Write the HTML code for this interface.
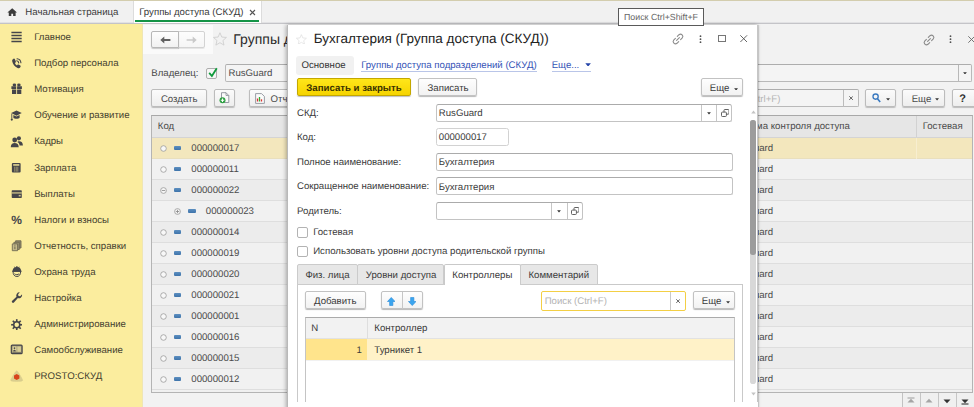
<!DOCTYPE html>
<html lang="ru"><head><meta charset="utf-8"><title>Группы доступа (СКУД)</title>
<style>
*{box-sizing:border-box;margin:0;padding:0}
html,body{width:974px;height:407px;overflow:hidden;background:#f2f2f2}
body{font-family:"Liberation Sans",sans-serif;font-size:9.65px;color:#3a3a3a;position:relative}
.a{position:absolute;white-space:nowrap}
.t{position:absolute;white-space:nowrap;line-height:12px;height:12px;letter-spacing:0;text-rendering:geometricPrecision}
.btn{position:absolute;background:linear-gradient(#fefefe,#f2f2f2);border:1px solid #c2c2c2;border-radius:2px;box-shadow:0 1px 1px rgba(0,0,0,.28)}
.dbtn{position:absolute;background:linear-gradient(#fbfbfb,#eeeeee);border:1px solid #bcbcbc;border-radius:2px;box-shadow:0 1px 1px rgba(0,0,0,.22)}
.inp{position:absolute;background:#fff;border:1px solid #c3c3c3;border-top-color:#ababab;border-radius:2.5px}
.dinp{position:absolute;background:#f4f4f4;border:1px solid #b9b9b9;border-top-color:#adadad;border-radius:2px}
.cb{position:absolute;background:#fff;border:1px solid #b3b3b3;border-radius:2px}
</style></head><body>
<div class="a" style="left:0.00px;top:0.00px;width:974.00px;height:1.00px;background:#d3cdae"></div>
<div class="a" style="left:0.00px;top:1.00px;width:974.00px;height:23.00px;background:#f1f1f1;border-bottom:1px solid #c4c4c8"></div>
<div class="a" style="left:0.00px;top:22.00px;width:974.00px;height:1.00px;background:#e2e2e4"></div>
<div class="a" style="left:132.50px;top:1.00px;width:129.00px;height:21.50px;background:#fff;border-left:1px solid #dcdcdc;border-right:1px solid #dcdcdc"></div>
<div class="a" style="left:135.00px;top:20.30px;width:124.00px;height:1.60px;background:#159447"></div>
<svg class="a" style="left:6.90px;top:7.60px;" width="10.4" height="8.7" viewBox="0 0 22 19"><path d="M11 0.5 L0.5 10 H3.5 V18.5 H9 V12.5 H13 V18.5 H18.5 V10 H21.5 Z" fill="#3c3c3c"/></svg>
<div class="t" style="left:25.30px;top:7px;">Начальная страница</div>
<div class="t" style="left:139.20px;top:7px;">Группы доступа (СКУД)</div>
<svg class="a" style="left:249.00px;top:9.30px;" width="7" height="7" viewBox="0 0 7 7"><path d="M1 1 L6 6 M6 1 L1 6" stroke="#555" stroke-width="1.1" fill="none"/></svg>
<div class="a" style="left:0.00px;top:24.00px;width:142.00px;height:383.00px;background:#fbed9e"></div>
<div class="a" style="left:142.00px;top:24.00px;width:1.30px;height:383.00px;background:#efe6b4"></div>
<div class="t" style="left:34.20px;top:32px;color:#44402f">Главное</div>
<div class="t" style="left:34.20px;top:58px;color:#44402f">Подбор персонала</div>
<div class="t" style="left:34.20px;top:84px;color:#44402f">Мотивация</div>
<div class="t" style="left:34.20px;top:110px;color:#44402f">Обучение и развитие</div>
<div class="t" style="left:34.20px;top:136px;color:#44402f">Кадры</div>
<div class="t" style="left:34.20px;top:163px;color:#44402f">Зарплата</div>
<div class="t" style="left:34.20px;top:189px;color:#44402f">Выплаты</div>
<div class="t" style="left:34.20px;top:215px;color:#44402f">Налоги и взносы</div>
<div class="t" style="left:34.20px;top:241px;color:#44402f">Отчетность, справки</div>
<div class="t" style="left:34.20px;top:267px;color:#44402f">Охрана труда</div>
<div class="t" style="left:34.20px;top:293px;color:#44402f">Настройка</div>
<div class="t" style="left:34.20px;top:319px;color:#44402f">Администрирование</div>
<div class="t" style="left:34.20px;top:345px;color:#44402f">Самообслуживание</div>
<div class="t" style="left:34.20px;top:371px;color:#44402f">PROSTO:СКУД</div>
<svg class="a" style="left:10.00px;top:30.30px;" width="14" height="14" viewBox="0 0 14 14"><path d="M1.400 2.500H11.700M1.400 5.500H11.700M1.400 8.400H11.700M1.400 11.400H11.700" stroke="#45454a" stroke-width="1.500"/></svg>
<svg class="a" style="left:10.00px;top:56.39px;" width="14" height="14" viewBox="0 0 14 14"><path d="M3.600 2.700C2.500 3.100 2 4.200 2.200 5.300 2.700 8.200 4.700 10.800 7.600 12 8.700 12.400 9.800 12.100 10.300 11.200L10.600 10.600C10.800 10.200 10.700 9.700 10.300 9.500L8.600 8.500C8.200 8.300 7.700 8.400 7.500 8.800L7 9.500C6 8.900 5.300 8 4.900 6.900L5.600 6.400C5.900 6.200 6 5.700 5.800 5.300L4.900 3.200C4.700 2.700 4.100 2.500 3.600 2.700Z" fill="#45454a"/><path d="M6.700 4.800A2.300 2.300 0 0 1 8.700 6.900M7 2.700A4.400 4.400 0 0 1 10.900 6.700" stroke="#45454a" stroke-width="1.100" fill="none" stroke-linecap="round"/></svg>
<svg class="a" style="left:10.00px;top:82.48px;" width="14" height="14" viewBox="0 0 14 14"><path d="M1.400 4.300H6.200V6.900H1.400zM7.100 4.300H11.900V6.900H7.100zM2 7.500H6.200V12.100H2zM7.100 7.500H11.300V12.100H7.100z" fill="#45454a"/><ellipse cx="4.400" cy="3" rx="1.800" ry="1.400" fill="#45454a"/><ellipse cx="8.900" cy="3" rx="1.800" ry="1.400" fill="#45454a"/></svg>
<svg class="a" style="left:10.40px;top:109.82px;" width="12" height="11.5" viewBox="0 0 24 24"><path d="M13 1 L24 6.500 L13 12 L2 6.500Z" fill="#45454a"/><path d="M6.500 10.200V16c2 2.800 11 2.800 13 0v-5.800L13 13.500z" fill="#45454a"/><path d="M3.200 7.500V18" stroke="#45454a" stroke-width="1.800"/><circle cx="3.200" cy="20" r="2.300" fill="#45454a"/></svg>
<svg class="a" style="left:10.00px;top:134.66px;" width="14" height="14" viewBox="0 0 14 14"><circle cx="8.900" cy="3.300" r="2.100" fill="#45454a"/><path d="M8.300 6.300C11 5.800 12.900 7.300 12.900 10.500H9.600C9.400 8.600 8.600 7.500 7.300 6.900z" fill="#45454a"/><circle cx="4.700" cy="5" r="2.400" fill="#45454a"/><path d="M0.800 12.300C0.800 9.200 2.300 8 4.700 8S8.700 9.200 8.700 12.300z" fill="#45454a"/></svg>
<svg class="a" style="left:11.45px;top:162.00px;" width="10.5" height="11.5" viewBox="0 0 24 24"><rect x="2" y="1" width="20" height="22" rx="2.500" fill="#45454a"/><path d="M5 4h14v3.200H5z" fill="#fbed9e"/><path d="M8.500 9.500V21M12 9.500V21M15.500 9.500V21" stroke="#fbed9e" stroke-width="1.300" opacity=".8"/></svg>
<svg class="a" style="left:10.95px;top:188.59px;" width="11.5" height="10.5" viewBox="0 0 24 24"><rect x="0.500" y="3" width="23" height="17.500" rx="1.500" fill="#45454a"/><path d="M0.500 7.500h23v3H0.500z" fill="#fbed9e" opacity=".75"/><rect x="16.500" y="13.500" width="4.500" height="3.500" fill="#cfc48a"/></svg>
<div class="t" style="left:11.20px;top:213px;font-size:12px;line-height:14px;height:14px;font-weight:bold;color:#45454a;letter-spacing:0">%</div>
<svg class="a" style="left:10.00px;top:239.02px;" width="14" height="14" viewBox="0 0 14 14"><g stroke="#6f6a52" stroke-width="0.900"><path d="M5.600 1.800H11V9H5.600z" fill="#8f8969"/><path d="M3.900 3.300H9.300V10.500H3.900z" fill="#9c9572"/><path d="M2.300 4.900H7.600V11.700H2.300z" fill="#c4ba8a"/></g><path d="M4.900 7.400V10.200" stroke="#6f6a52" stroke-width="1"/><circle cx="4.900" cy="6.300" r="0.550" fill="#6f6a52"/></svg>
<svg class="a" style="left:10.00px;top:265.11px;" width="14" height="14" viewBox="0 0 14 14"><path d="M3 6.200C3 9.800 4.600 11.500 6.850 11.500S10.700 9.800 10.700 6.200z" fill="#fbed9e" stroke="#45454a" stroke-width="1"/><path d="M2.600 6.200C2.600 3.300 4.300 2 6.850 2S11.100 3.300 11.100 6.200z" fill="#45454a"/><path d="M2.200 5.600H11.500V6.800H2.200z" fill="#45454a"/><path d="M6.100 1.200H7.600V3H6.100z" fill="#45454a"/><path d="M4.500 1.700L5.200 3M9.200 1.700L8.500 3" stroke="#45454a" stroke-width="0.800"/><path d="M4.600 8.600C5.500 10.100 8.200 10.100 9.100 8.600" stroke="#45454a" stroke-width="1" fill="none"/></svg>
<svg class="a" style="left:10.50px;top:292.45px;" width="12" height="11.5" viewBox="0 0 24 24"><path d="M22.700 6.400a6.600 6.600 0 0 1-8.800 6.200L5.600 21.800a2.500 2.500 0 0 1-3.600-3.600l9-8.200A6.600 6.600 0 0 1 17.600.8l-3.300 3.700.8 3.600 3.600.8 3.400-3.600c.4.300.6.700.6 1.100z" fill="#45454a"/></svg>
<svg class="a" style="left:10.95px;top:318.54px;" width="11.5" height="11.5" viewBox="0 0 24 24"><rect x="10.300" y="0.300" width="3.400" height="6" fill="#45454a" transform="rotate(0 12 12)"/><rect x="10.300" y="0.300" width="3.400" height="6" fill="#45454a" transform="rotate(45 12 12)"/><rect x="10.300" y="0.300" width="3.400" height="6" fill="#45454a" transform="rotate(90 12 12)"/><rect x="10.300" y="0.300" width="3.400" height="6" fill="#45454a" transform="rotate(135 12 12)"/><rect x="10.300" y="0.300" width="3.400" height="6" fill="#45454a" transform="rotate(180 12 12)"/><rect x="10.300" y="0.300" width="3.400" height="6" fill="#45454a" transform="rotate(225 12 12)"/><rect x="10.300" y="0.300" width="3.400" height="6" fill="#45454a" transform="rotate(270 12 12)"/><rect x="10.300" y="0.300" width="3.400" height="6" fill="#45454a" transform="rotate(315 12 12)"/><circle cx="12" cy="12" r="6.300" fill="none" stroke="#45454a" stroke-width="3.200"/></svg>
<svg class="a" style="left:10.00px;top:343.38px;" width="14" height="14" viewBox="0 0 14 14"><rect x="1.300" y="2.100" width="10.800" height="8.600" rx="0.900" fill="#a29b77" stroke="#45454a" stroke-width="1.200"/><rect x="2.700" y="3.500" width="3.700" height="5.300" fill="#e9dfa0"/><rect x="7.300" y="3.500" width="3.600" height="5.300" fill="#d9cf95"/><circle cx="4.500" cy="5.100" r="0.950" fill="#45454a"/><path d="M3.100 8.400c0-2.300 2.800-2.300 2.800 0z" fill="#45454a"/><path d="M2.500 9.500H11" stroke="#45454a" stroke-width="0.600" opacity=".6"/></svg>
<svg class="a" style="left:10.00px;top:369.47px;" width="14" height="14" viewBox="0 0 14 14"><path d="M6.700 1.900C7.600 1.900 12.600 10.200 12.600 11.400 12.600 12.700 0.800 12.700 0.800 11.400 0.800 10.200 5.800 1.900 6.700 1.900z" fill="#dbcf8e" stroke="#d3c889" stroke-width="0.600"/><path d="M6.700 4.900L9.400 6.400V9.400L6.700 10.900 4 9.400V6.400z" fill="#d8451b"/></svg>
<div class="a" style="left:143.30px;top:24.50px;width:70.00px;height:29.30px;background:#fafafa"></div>
<div class="a" style="left:178.00px;top:31.00px;width:27.00px;height:17.40px;background:linear-gradient(#fdfdfd,#f5f5f5);border:1px solid #d3d3d3;border-radius:0 2px 2px 0;box-shadow:0 1px 0 rgba(0,0,0,.08)"></div>
<div class="a" style="left:151.00px;top:31.00px;width:28.00px;height:17.40px;background:linear-gradient(#fdfdfd,#f1f1f1);border:1px solid #b7b7b7;border-radius:2px 0 0 2px;box-shadow:0 1px 1px rgba(0,0,0,.2)"></div>
<svg class="a" style="left:159.80px;top:35.70px;" width="11" height="8" viewBox="0 0 11 8"><path d="M0.300 4L4.300 0.500V3.100H10.400V4.900H4.300V7.500z" fill="#606060"/></svg>
<svg class="a" style="left:186.00px;top:35.70px;" width="11" height="8" viewBox="0 0 11 8"><path d="M10.700 4L6.700 0.500V3.200H0.600V4.800H6.700V7.500z" fill="#c9c9c9"/></svg>
<svg class="a" style="left:213.10px;top:32.30px;" width="13.9" height="13.9" viewBox="0 0 14 14"><path d="M7 0.800 L8.850 5.100 13.500 5.500 10 8.600 11.050 13.200 7 10.800 2.950 13.200 4 8.600 0.500 5.500 5.150 5.100Z" fill="none" stroke="#cfcfcf" stroke-width="0.900"/></svg>
<div class="t" style="left:233.30px;top:30px;font-size:14px;line-height:18px;height:18px;color:#2b2b2b">Группы доступа (СКУД)</div>
<div class="t" style="left:151.30px;top:68px;color:#4a4a4a">Владелец:</div>
<div class="cb" style="left:206.30px;top:68.00px;width:10.70px;height:10.50px;background:#f6f6f6;border-color:#adadad"></div>
<svg class="a" style="left:207.50px;top:66.50px;" width="10" height="11" viewBox="0 0 10 11"><path d="M1.200 5.800L3.900 9 8.800 1.200" stroke="#109a3c" stroke-width="1.800" fill="none"/></svg>
<div class="dinp" style="left:225.20px;top:64.30px;width:747.00px;height:17.30px;"></div>
<div class="a" style="left:957.50px;top:65.00px;width:1.00px;height:16.00px;background:#b8b8b8"></div>
<svg class="a" style="left:962.60px;top:71.80px;" width="4" height="2.6" viewBox="0 0 4 2.600"><path d="M0.100 0.200h3.800L2 2.500z" fill="#333"/></svg>
<div class="t" style="left:228.50px;top:68px;color:#4a4a4a">RusGuard</div>
<svg class="a" style="left:921.70px;top:32.80px;" width="14" height="14" viewBox="0 0 14 14"><g fill="none" stroke="#8a8a8a" stroke-width="1.100" stroke-linecap="round"><path d="M5.600 8.400L8.400 5.600"/><path d="M6.300 4.400L8 2.700a2.350 2.350 0 0 1 3.300 3.300L9.600 7.700"/><path d="M7.700 9.600L6 11.300a2.350 2.350 0 0 1-3.300-3.300L4.400 6.300"/></g></svg>
<svg class="a" style="left:949.10px;top:35.30px;" width="3" height="9" viewBox="0 0 3 9"><circle cx="1.500" cy="1.200" r="0.900" fill="#505050"/><circle cx="1.500" cy="4.200" r="0.900" fill="#505050"/><circle cx="1.500" cy="7.200" r="0.900" fill="#505050"/></svg>
<svg class="a" style="left:967.50px;top:36.20px;" width="7" height="7" viewBox="0 0 7 7"><path d="M0.300 0.300L6.700 6.700M6.700 0.300L0.300 6.700" stroke="#666" stroke-width="0.900"/></svg>
<div class="dbtn" style="left:151.20px;top:89.00px;width:55.50px;height:18.20px;"></div>
<div class="t" style="left:160.90px;top:94px;color:#4a4a4a">Создать</div>
<div class="dbtn" style="left:213.60px;top:89.00px;width:21.40px;height:18.20px;"></div>
<svg class="a" style="left:219.00px;top:92.30px;" width="11" height="12" viewBox="0 0 11 12"><path d="M2.500 0.700H7L9.800 3.500V10.500H2.500z" fill="#fafafa" stroke="#8a8f98" stroke-width="0.900"/><path d="M7 0.700V3.500H9.800" fill="none" stroke="#8a8f98" stroke-width="0.800"/><circle cx="3.500" cy="8.300" r="3" fill="#2ea043"/><path d="M3.500 6.600V10M1.800 8.300H5.200" stroke="#fff" stroke-width="1.100"/></svg>
<div class="dbtn" style="left:249.10px;top:89.00px;width:80.00px;height:18.20px;"></div>
<svg class="a" style="left:255.00px;top:92.70px;" width="10" height="11" viewBox="0 0 10 11"><path d="M0.600 0.600H6.500L9.400 3.400V10.400H0.600z" fill="#fbfbfb" stroke="#8f949c" stroke-width="0.900"/><path d="M2.500 8.500V5.500" stroke="#d33" stroke-width="1.300"/><path d="M4.500 8.500V4" stroke="#3a3" stroke-width="1.300"/><path d="M6.500 8.500V6.300" stroke="#d33" stroke-width="1.300"/></svg>
<div class="t" style="left:270.50px;top:94px;color:#4a4a4a">Отчеты</div>
<div class="dinp" style="left:700.00px;top:89.20px;width:158.50px;height:18.30px;"></div>
<div class="a" style="left:843.30px;top:90.00px;width:1.00px;height:16.70px;background:#bcbcbc"></div>
<div class="t" style="left:757.70px;top:94px;color:#b4b4b4">trl+F)</div>
<svg class="a" style="left:848.70px;top:96.20px;" width="4.2" height="4.2" viewBox="0 0 4.200 4.200"><path d="M0.300 0.300L3.900 3.900M3.900 0.300L0.300 3.900" stroke="#5a5a5a" stroke-width="0.950"/></svg>
<div class="dbtn" style="left:865.00px;top:89.00px;width:31.00px;height:18.20px;"></div>
<svg class="a" style="left:871.50px;top:93.00px;" width="9" height="10" viewBox="0 0 9 10"><circle cx="3.600" cy="3.600" r="2.600" fill="none" stroke="#3a79c0" stroke-width="1.350"/><path d="M5.500 5.700L8.200 9" stroke="#3a79c0" stroke-width="1.600"/></svg>
<svg class="a" style="left:886.20px;top:98.00px;" width="4.2" height="2.7" viewBox="0 0 4 2.600"><path d="M0.100 0.200h3.800L2 2.500z" fill="#333"/></svg>
<div class="dbtn" style="left:902.40px;top:89.00px;width:42.30px;height:18.20px;"></div>
<div class="t" style="left:911.70px;top:94px;color:#4a4a4a">Еще</div>
<svg class="a" style="left:935.30px;top:98.00px;" width="4.2" height="2.7" viewBox="0 0 4 2.600"><path d="M0.100 0.200h3.800L2 2.500z" fill="#333"/></svg>
<div class="dbtn" style="left:951.60px;top:89.00px;width:26.00px;height:18.20px;"></div>
<div class="t" style="left:959.30px;top:93px;font-size:11px;font-weight:bold;color:#2e2e2e">?</div>
<div class="a" style="left:151.00px;top:115.00px;width:822.00px;height:278.00px;background:#f0f0f0;border:1px solid #b4b4b4;border-top-color:#a8a8a8"></div>
<div class="a" style="left:152.00px;top:116.00px;width:820.00px;height:22.00px;background:#e6e6e6;border-bottom:1px solid #d4d4d4"></div>
<div class="t" style="left:157.80px;top:121px;color:#4a4a4a">Код</div>
<div class="t" style="right:124.20px;top:121px;color:#4a4a4a">Система контроля доступа</div>
<div class="t" style="left:922.70px;top:121px;color:#4a4a4a">Гостевая</div>
<div class="a" style="left:916.30px;top:116.00px;width:1.00px;height:21.00px;background:#d2d2d2"></div>
<div class="a" style="left:152.00px;top:138.00px;width:820.00px;height:21.00px;background:#f3e7bd;border-bottom:1px solid #e9dfbd"></div>
<svg class="a" style="left:159.70px;top:144.70px;" width="7" height="7" viewBox="0 0 7 7"><circle cx="3.500" cy="3.500" r="2.800" fill="#f8f8f8" stroke="#9a9a9a" stroke-width="0.800"/></svg>
<div class="a" style="left:173.70px;top:146.30px;width:7.50px;height:3.60px;background:linear-gradient(#5d8fc0,#3e74ab);border-radius:1px"></div>
<div class="t" style="left:191.30px;top:143px;color:#4a4a4a">000000017</div>
<div class="t" style="left:729.30px;top:143px;color:#4a4a4a">RusGuard</div>
<div class="a" style="left:916.30px;top:138.00px;width:1.00px;height:21.00px;background:#f7eed0"></div>
<div class="a" style="left:152.00px;top:159.00px;width:820.00px;height:21.00px;background:#f1f1f1;border-bottom:1px solid #dedede"></div>
<svg class="a" style="left:159.70px;top:165.70px;" width="7" height="7" viewBox="0 0 7 7"><circle cx="3.500" cy="3.500" r="2.800" fill="#f8f8f8" stroke="#9a9a9a" stroke-width="0.800"/></svg>
<div class="a" style="left:173.70px;top:167.30px;width:7.50px;height:3.60px;background:linear-gradient(#5d8fc0,#3e74ab);border-radius:1px"></div>
<div class="t" style="left:191.30px;top:164px;color:#4a4a4a">000000011</div>
<div class="t" style="left:729.30px;top:164px;color:#4a4a4a">RusGuard</div>
<div class="a" style="left:152.00px;top:180.00px;width:820.00px;height:21.00px;background:#ececec;border-bottom:1px solid #dedede"></div>
<svg class="a" style="left:159.70px;top:186.70px;" width="7" height="7" viewBox="0 0 7 7"><circle cx="3.500" cy="3.500" r="2.900" fill="#f6f6f6" stroke="#999" stroke-width="0.800"/><path d="M1.800 3.500H5.200" stroke="#888" stroke-width="0.800"/></svg>
<div class="a" style="left:173.70px;top:188.30px;width:7.50px;height:3.60px;background:linear-gradient(#5d8fc0,#3e74ab);border-radius:1px"></div>
<div class="t" style="left:191.30px;top:185px;color:#4a4a4a">000000022</div>
<div class="t" style="left:729.30px;top:185px;color:#4a4a4a">RusGuard</div>
<div class="a" style="left:152.00px;top:201.00px;width:820.00px;height:21.00px;background:#f1f1f1;border-bottom:1px solid #dedede"></div>
<svg class="a" style="left:174.20px;top:207.70px;" width="7" height="7" viewBox="0 0 7 7"><circle cx="3.500" cy="3.500" r="2.900" fill="#f6f6f6" stroke="#999" stroke-width="0.800"/><path d="M1.800 3.500H5.200M3.500 1.800V5.200" stroke="#888" stroke-width="0.800"/></svg>
<div class="a" style="left:188.20px;top:209.30px;width:7.50px;height:3.60px;background:linear-gradient(#5d8fc0,#3e74ab);border-radius:1px"></div>
<div class="t" style="left:205.80px;top:206px;color:#4a4a4a">000000023</div>
<div class="t" style="left:729.30px;top:206px;color:#4a4a4a">RusGuard</div>
<div class="a" style="left:152.00px;top:222.00px;width:820.00px;height:21.00px;background:#ececec;border-bottom:1px solid #dedede"></div>
<svg class="a" style="left:159.70px;top:228.70px;" width="7" height="7" viewBox="0 0 7 7"><circle cx="3.500" cy="3.500" r="2.800" fill="#f8f8f8" stroke="#9a9a9a" stroke-width="0.800"/></svg>
<div class="a" style="left:173.70px;top:230.30px;width:7.50px;height:3.60px;background:linear-gradient(#5d8fc0,#3e74ab);border-radius:1px"></div>
<div class="t" style="left:191.30px;top:227px;color:#4a4a4a">000000014</div>
<div class="t" style="left:729.30px;top:227px;color:#4a4a4a">RusGuard</div>
<div class="a" style="left:152.00px;top:243.00px;width:820.00px;height:21.00px;background:#f1f1f1;border-bottom:1px solid #dedede"></div>
<svg class="a" style="left:159.70px;top:249.70px;" width="7" height="7" viewBox="0 0 7 7"><circle cx="3.500" cy="3.500" r="2.800" fill="#f8f8f8" stroke="#9a9a9a" stroke-width="0.800"/></svg>
<div class="a" style="left:173.70px;top:251.30px;width:7.50px;height:3.60px;background:linear-gradient(#5d8fc0,#3e74ab);border-radius:1px"></div>
<div class="t" style="left:191.30px;top:248px;color:#4a4a4a">000000019</div>
<div class="t" style="left:729.30px;top:248px;color:#4a4a4a">RusGuard</div>
<div class="a" style="left:152.00px;top:264.00px;width:820.00px;height:21.00px;background:#ececec;border-bottom:1px solid #dedede"></div>
<svg class="a" style="left:159.70px;top:270.70px;" width="7" height="7" viewBox="0 0 7 7"><circle cx="3.500" cy="3.500" r="2.800" fill="#f8f8f8" stroke="#9a9a9a" stroke-width="0.800"/></svg>
<div class="a" style="left:173.70px;top:272.30px;width:7.50px;height:3.60px;background:linear-gradient(#5d8fc0,#3e74ab);border-radius:1px"></div>
<div class="t" style="left:191.30px;top:269px;color:#4a4a4a">000000020</div>
<div class="t" style="left:729.30px;top:269px;color:#4a4a4a">RusGuard</div>
<div class="a" style="left:152.00px;top:285.00px;width:820.00px;height:21.00px;background:#f1f1f1;border-bottom:1px solid #dedede"></div>
<svg class="a" style="left:159.70px;top:291.70px;" width="7" height="7" viewBox="0 0 7 7"><circle cx="3.500" cy="3.500" r="2.800" fill="#f8f8f8" stroke="#9a9a9a" stroke-width="0.800"/></svg>
<div class="a" style="left:173.70px;top:293.30px;width:7.50px;height:3.60px;background:linear-gradient(#5d8fc0,#3e74ab);border-radius:1px"></div>
<div class="t" style="left:191.30px;top:290px;color:#4a4a4a">000000021</div>
<div class="t" style="left:729.30px;top:290px;color:#4a4a4a">RusGuard</div>
<div class="a" style="left:152.00px;top:306.00px;width:820.00px;height:21.00px;background:#ececec;border-bottom:1px solid #dedede"></div>
<svg class="a" style="left:159.70px;top:312.70px;" width="7" height="7" viewBox="0 0 7 7"><circle cx="3.500" cy="3.500" r="2.800" fill="#f8f8f8" stroke="#9a9a9a" stroke-width="0.800"/></svg>
<div class="a" style="left:173.70px;top:314.30px;width:7.50px;height:3.60px;background:linear-gradient(#5d8fc0,#3e74ab);border-radius:1px"></div>
<div class="t" style="left:191.30px;top:311px;color:#4a4a4a">000000001</div>
<div class="t" style="left:729.30px;top:311px;color:#4a4a4a">RusGuard</div>
<div class="a" style="left:152.00px;top:327.00px;width:820.00px;height:21.00px;background:#f1f1f1;border-bottom:1px solid #dedede"></div>
<svg class="a" style="left:159.70px;top:333.70px;" width="7" height="7" viewBox="0 0 7 7"><circle cx="3.500" cy="3.500" r="2.800" fill="#f8f8f8" stroke="#9a9a9a" stroke-width="0.800"/></svg>
<div class="a" style="left:173.70px;top:335.30px;width:7.50px;height:3.60px;background:linear-gradient(#5d8fc0,#3e74ab);border-radius:1px"></div>
<div class="t" style="left:191.30px;top:332px;color:#4a4a4a">000000016</div>
<div class="t" style="left:729.30px;top:332px;color:#4a4a4a">RusGuard</div>
<div class="a" style="left:152.00px;top:348.00px;width:820.00px;height:21.00px;background:#ececec;border-bottom:1px solid #dedede"></div>
<svg class="a" style="left:159.70px;top:354.70px;" width="7" height="7" viewBox="0 0 7 7"><circle cx="3.500" cy="3.500" r="2.800" fill="#f8f8f8" stroke="#9a9a9a" stroke-width="0.800"/></svg>
<div class="a" style="left:173.70px;top:356.30px;width:7.50px;height:3.60px;background:linear-gradient(#5d8fc0,#3e74ab);border-radius:1px"></div>
<div class="t" style="left:191.30px;top:353px;color:#4a4a4a">000000015</div>
<div class="t" style="left:729.30px;top:353px;color:#4a4a4a">RusGuard</div>
<div class="a" style="left:152.00px;top:369.00px;width:820.00px;height:21.00px;background:#f1f1f1;border-bottom:1px solid #dedede"></div>
<svg class="a" style="left:159.70px;top:375.70px;" width="7" height="7" viewBox="0 0 7 7"><circle cx="3.500" cy="3.500" r="2.800" fill="#f8f8f8" stroke="#9a9a9a" stroke-width="0.800"/></svg>
<div class="a" style="left:173.70px;top:377.30px;width:7.50px;height:3.60px;background:linear-gradient(#5d8fc0,#3e74ab);border-radius:1px"></div>
<div class="t" style="left:191.30px;top:374px;color:#4a4a4a">000000012</div>
<div class="t" style="left:729.30px;top:374px;color:#4a4a4a">RusGuard</div>
<div class="a" style="left:902.40px;top:393.20px;width:72.00px;height:14.00px;background:#f0f0f0;border-left:1px solid #c2c2c2"></div>
<div class="a" style="left:920.20px;top:393.20px;width:1.00px;height:14.00px;background:#c6c6c6"></div>
<div class="a" style="left:938.20px;top:393.20px;width:1.00px;height:14.00px;background:#c6c6c6"></div>
<div class="a" style="left:955.60px;top:393.20px;width:1.00px;height:14.00px;background:#c6c6c6"></div>
<svg class="a" style="left:907.30px;top:396.50px;" width="8" height="8" viewBox="0 0 8 8"><path d="M0.500 5.500L4 1.800 7.500 5.500z" fill="#a5a5a5"/><path d="M0.500 1H7.500" stroke="#a5a5a5" stroke-width="1.100"/></svg>
<svg class="a" style="left:925.20px;top:396.50px;" width="8" height="8" viewBox="0 0 8 8"><path d="M0.500 5.500L4 1.800 7.500 5.500z" fill="#a5a5a5"/></svg>
<svg class="a" style="left:943.00px;top:396.50px;" width="8" height="8" viewBox="0 0 8 8"><path d="M0.500 2.500L4 6.200 7.500 2.500z" fill="#333"/></svg>
<svg class="a" style="left:960.80px;top:396.50px;" width="8" height="8" viewBox="0 0 8 8"><path d="M0.500 2.500L4 6.200 7.500 2.500z" fill="#333"/><path d="M0.500 7H7.500" stroke="#333" stroke-width="1.100"/></svg>
<div class="a" style="left:287.00px;top:24.80px;width:471.00px;height:390.00px;background:#fff;box-shadow:-1px 0 4px rgba(0,0,0,.3),1px 0 1px rgba(0,0,0,.12);border-right:1px solid #c6c6c6;border-left:1px solid #b9b9b9"></div>
<svg class="a" style="left:296.10px;top:33.70px;" width="10.8" height="10.8" viewBox="0 0 14 14"><path d="M7 0.800 L8.850 5.100 13.500 5.500 10 8.600 11.050 13.200 7 10.800 2.950 13.200 4 8.600 0.500 5.500 5.150 5.100Z" fill="none" stroke="#dedede" stroke-width="0.900"/></svg>
<div class="t" style="left:313.80px;top:30px;font-size:13.5px;line-height:18px;height:18px;color:#222">Бухгалтерия (Группа доступа (СКУД))</div>
<svg class="a" style="left:671.40px;top:32.30px;" width="14" height="14" viewBox="0 0 14 14"><g fill="none" stroke="#8c8c8c" stroke-width="1.100" stroke-linecap="round"><path d="M5.600 8.400L8.400 5.600"/><path d="M6.300 4.400L8 2.700a2.350 2.350 0 0 1 3.300 3.300L9.600 7.700"/><path d="M7.700 9.600L6 11.300a2.350 2.350 0 0 1-3.300-3.300L4.400 6.300"/></g></svg>
<svg class="a" style="left:699.20px;top:34.90px;" width="3" height="9" viewBox="0 0 3 9"><circle cx="1.500" cy="1.200" r="0.900" fill="#505050"/><circle cx="1.500" cy="4.200" r="0.900" fill="#505050"/><circle cx="1.500" cy="7.200" r="0.900" fill="#505050"/></svg>
<div class="a" style="left:718.30px;top:35.20px;width:7.60px;height:7.10px;border:1px solid #767676"></div>
<svg class="a" style="left:740.30px;top:35.00px;" width="7.4" height="7.4" viewBox="0 0 7.400 7.400"><path d="M0.300 0.300L7.100 7.100M7.100 0.300L0.300 7.100" stroke="#555" stroke-width="0.900"/></svg>
<div class="a" style="left:295.50px;top:55.50px;width:58.20px;height:19.80px;background:#f1f1f1;border-radius:3px"></div>
<div class="t" style="left:301.50px;top:60px;color:#333">Основное</div>
<div class="t" style="left:361.20px;top:60px;color:#3553b6">Группы доступа подразделений (СКУД)</div>
<div class="a" style="left:361.20px;top:70.60px;width:175.60px;height:1.00px;background:#b9c5e8"></div>
<div class="t" style="left:551.70px;top:60px;color:#3553b6">Еще...</div>
<div class="a" style="left:551.70px;top:70.60px;width:39.00px;height:1.00px;background:#b9c5e8"></div>
<svg class="a" style="left:584.60px;top:62.70px;" width="6.2" height="3.8" viewBox="0 0 6 4"><path d="M0.100 0.200h5.800L3 3.900z" fill="#2444a8"/></svg>
<div class="a" style="left:297.00px;top:78.20px;width:113.80px;height:18.20px;background:linear-gradient(#ffe61a,#f6d400);border:1px solid #c4a800;border-radius:2px;box-shadow:0 1px 1px rgba(0,0,0,.25)"></div>
<div class="t" style="left:306.30px;top:83px;font-weight:bold;color:#3a3200">Записать и закрыть</div>
<div class="btn" style="left:417.70px;top:78.20px;width:59.50px;height:18.20px;"></div>
<div class="t" style="left:427.50px;top:83px;">Записать</div>
<div class="btn" style="left:700.50px;top:78.20px;width:42.30px;height:18.20px;"></div>
<div class="t" style="left:709.80px;top:83px;">Еще</div>
<svg class="a" style="left:733.80px;top:87.70px;" width="4.2" height="2.7" viewBox="0 0 4 2.600"><path d="M0.100 0.200h3.800L2 2.500z" fill="#333"/></svg>
<div class="t" style="left:297.00px;top:108px;">СКД:</div>
<div class="t" style="left:297.00px;top:132px;">Код:</div>
<div class="t" style="left:297.00px;top:157px;">Полное наименование:</div>
<div class="t" style="left:297.00px;top:181px;">Сокращенное наименование:</div>
<div class="t" style="left:297.00px;top:206px;">Родитель:</div>
<div class="inp" style="left:435.50px;top:104.00px;width:296.50px;height:18.00px;"></div>
<div class="t" style="left:438.80px;top:108px;">RusGuard</div>
<div class="inp" style="left:435.50px;top:128.40px;width:73.30px;height:18.00px;border-color:#d2d2d2"></div>
<div class="t" style="left:438.80px;top:132px;">000000017</div>
<div class="inp" style="left:435.50px;top:152.90px;width:297.50px;height:18.00px;"></div>
<div class="t" style="left:438.80px;top:157px;">Бухгалтерия</div>
<div class="inp" style="left:435.50px;top:177.40px;width:297.50px;height:18.00px;"></div>
<div class="t" style="left:438.80px;top:182px;">Бухгалтерия</div>
<div class="inp" style="left:435.50px;top:202.00px;width:147.00px;height:18.00px;"></div>
<div class="a" style="left:701.00px;top:104.80px;width:1.00px;height:16.40px;background:#c6c6c6"></div>
<div class="a" style="left:716.30px;top:104.80px;width:1.00px;height:16.40px;background:#c6c6c6"></div>
<svg class="a" style="left:706.80px;top:112.20px;" width="4" height="2.6" viewBox="0 0 4 2.600"><path d="M0.100 0.200h3.800L2 2.500z" fill="#333"/></svg>
<svg class="a" style="left:720.60px;top:109.40px;" width="8.5" height="8" viewBox="0 0 8.500 8"><g fill="none" stroke="#5a5a5a" stroke-width="0.950"><path d="M3 3.100V1.400a.9.900 0 0 1 .9-.9H7.100a.9.900 0 0 1 .9.900V4.300a.9.900 0 0 1-.9.900H5.400"/><rect x="0.500" y="3.100" width="4.900" height="4.400" rx="0.900"/></g></svg>
<div class="a" style="left:551.30px;top:202.80px;width:1.00px;height:16.40px;background:#c6c6c6"></div>
<div class="a" style="left:566.50px;top:202.80px;width:1.00px;height:16.40px;background:#c6c6c6"></div>
<svg class="a" style="left:557.10px;top:210.20px;" width="4" height="2.6" viewBox="0 0 4 2.600"><path d="M0.100 0.200h3.800L2 2.500z" fill="#333"/></svg>
<svg class="a" style="left:570.80px;top:207.40px;" width="8.5" height="8" viewBox="0 0 8.500 8"><g fill="none" stroke="#5a5a5a" stroke-width="0.950"><path d="M3 3.100V1.400a.9.900 0 0 1 .9-.9H7.100a.9.900 0 0 1 .9.900V4.300a.9.900 0 0 1-.9.900H5.400"/><rect x="0.500" y="3.100" width="4.900" height="4.400" rx="0.900"/></g></svg>
<div class="cb" style="left:297.00px;top:227.00px;width:11.00px;height:11.00px;"></div>
<div class="t" style="left:313.20px;top:227px;">Гостевая</div>
<div class="cb" style="left:297.00px;top:246.00px;width:11.00px;height:11.00px;"></div>
<div class="t" style="left:313.20px;top:246px;">Использовать уровни доступа родительской группы</div>
<div class="a" style="left:296.50px;top:284.30px;width:446.80px;height:125.00px;border:1px solid #c9c9c9;border-bottom:none;background:#fff"></div>
<div class="a" style="left:296.50px;top:264.30px;width:61.20px;height:20.50px;background:#e7e7e7;border:1px solid #cbcbcb;border-radius:2px 2px 0 0"></div>
<div class="t" style="left:305.40px;top:270px;">Физ. лица</div>
<div class="a" style="left:356.70px;top:264.30px;width:87.40px;height:20.50px;background:#e7e7e7;border:1px solid #cbcbcb;border-radius:2px 2px 0 0"></div>
<div class="t" style="left:365.80px;top:270px;">Уровни доступа</div>
<div class="a" style="left:443.60px;top:264.30px;width:77.40px;height:21.00px;background:#fff;border:1px solid #c9c9c9;border-bottom:none;border-radius:2px 2px 0 0"></div>
<div class="t" style="left:452.30px;top:270px;">Контроллеры</div>
<div class="a" style="left:520.00px;top:264.30px;width:78.20px;height:20.50px;background:#e7e7e7;border:1px solid #cbcbcb;border-radius:2px 2px 0 0"></div>
<div class="t" style="left:528.50px;top:270px;">Комментарий</div>
<div class="btn" style="left:304.90px;top:291.40px;width:60.90px;height:18.10px;"></div>
<div class="t" style="left:314.00px;top:296px;">Добавить</div>
<div class="btn" style="left:381.00px;top:291.40px;width:41.60px;height:18.10px;"></div>
<div class="a" style="left:401.70px;top:292.00px;width:1.00px;height:17.00px;background:#c6c6c6"></div>
<svg class="a" style="left:386.90px;top:296.80px;" width="8.5" height="9" viewBox="0 0 9 10"><path d="M4.500 0.500L8.700 5H6.300V9.500H2.700V5H0.300z" fill="#3aa5ef" stroke="#2a8ad8" stroke-width="0.700"/></svg>
<svg class="a" style="left:407.90px;top:296.90px;" width="8.5" height="9" viewBox="0 0 9 10"><path d="M4.500 9.500L8.700 5H6.300V0.500H2.700V5H0.300z" fill="#3aa5ef" stroke="#2a8ad8" stroke-width="0.700"/></svg>
<div class="a" style="left:541.30px;top:291.20px;width:144.50px;height:19.40px;background:#fff;border:1px solid #f3cf45;border-radius:2px"></div>
<div class="a" style="left:670.30px;top:292.20px;width:1.00px;height:17.40px;background:#c9c9c9"></div>
<div class="t" style="left:544.70px;top:296px;color:#b3b3b3">Поиск (Ctrl+F)</div>
<svg class="a" style="left:675.90px;top:298.80px;" width="4.2" height="4.2" viewBox="0 0 4.200 4.200"><path d="M0.300 0.300L3.900 3.900M3.900 0.300L0.300 3.900" stroke="#5a5a5a" stroke-width="0.950"/></svg>
<div class="btn" style="left:692.60px;top:291.40px;width:42.20px;height:18.10px;"></div>
<div class="t" style="left:701.80px;top:296px;">Еще</div>
<svg class="a" style="left:725.80px;top:301.20px;" width="4.2" height="2.7" viewBox="0 0 4 2.600"><path d="M0.100 0.200h3.800L2 2.500z" fill="#333"/></svg>
<div class="a" style="left:304.70px;top:316.70px;width:430.30px;height:85.30px;border:1px solid #c4c4c4;border-bottom:none;border-top-color:#ababab;background:#fff"></div>
<div class="a" style="left:305.70px;top:317.70px;width:428.30px;height:21.50px;background:#f2f2f2;border-bottom:1px solid #e2e2e2"></div>
<div class="a" style="left:367.20px;top:317.70px;width:1.00px;height:21.50px;background:#dedede"></div>
<div class="t" style="left:311.20px;top:323px;">N</div>
<div class="t" style="left:374.30px;top:323px;">Контроллер</div>
<div class="a" style="left:305.70px;top:339.20px;width:61.50px;height:20.80px;background:#ffe48c"></div>
<div class="a" style="left:367.20px;top:339.20px;width:366.80px;height:20.80px;background:#fff2c8"></div>
<div class="a" style="left:305.70px;top:360.00px;width:428.30px;height:1.00px;background:#f1f1f1"></div>
<div class="t" style="right:612.20px;top:345px;">1</div>
<div class="t" style="left:374.30px;top:345px;">Турникет 1</div>
<div class="a" style="left:288.50px;top:401.90px;width:469.00px;height:6.00px;background:#fff"></div>
<div class="a" style="left:750.30px;top:120.00px;width:5.70px;height:264.00px;background:#d8d8d8;border-radius:2.800px"></div>
<div class="a" style="left:750.40px;top:120.30px;width:5.50px;height:134.50px;background:#9c9c9c;border-radius:2.700px"></div>
<svg class="a" style="left:750.70px;top:109.70px;" width="5" height="4" viewBox="0 0 5 4"><path d="M0.200 3.600L2.500 0.400 4.800 3.600z" fill="#c4c4c4"/></svg>
<svg class="a" style="left:750.70px;top:391.50px;" width="5" height="4" viewBox="0 0 5 4"><path d="M0.200 0.400L2.500 3.600 4.800 0.400z" fill="#c4c4c4"/></svg>
<div class="a" style="left:618.00px;top:7.50px;width:85.80px;height:18.20px;background:#fff;border:1px solid #5a5a5a"></div>
<div class="t" style="left:624.00px;top:11px;font-size:8.83px;color:#666;letter-spacing:0">Поиск Ctrl+Shift+F</div>
</body></html>
